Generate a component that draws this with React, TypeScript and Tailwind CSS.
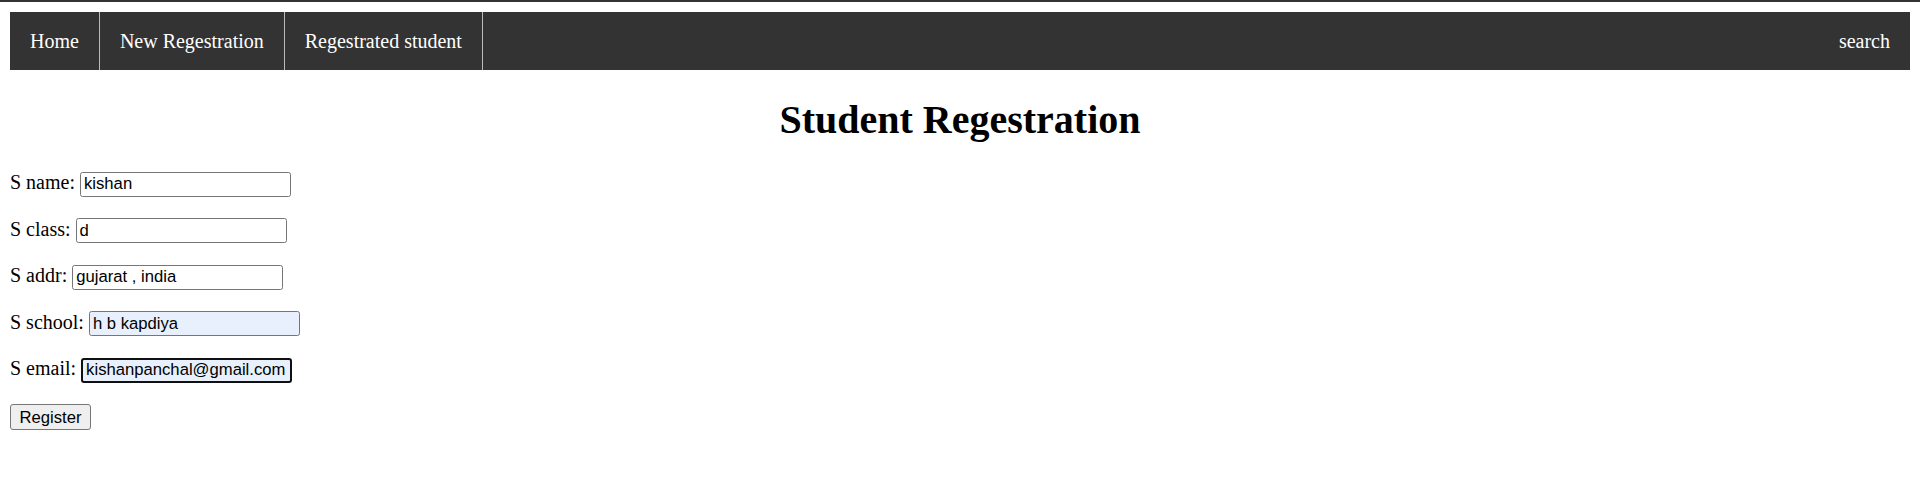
import React from "react";

const serif = { fontFamily: '"Liberation Serif", "Times New Roman", serif' };

function Row({ label, value, extra }: { label: string; value: string; extra?: string }) {
  return (
    <div className="flex items-baseline h-[25px]">
      <span className="text-[20px] leading-[23px] text-black whitespace-pre" style={serif}>
        {label + "\u00a0"}
      </span>
      <input
        readOnly
        value={value}
        className={
          "w-[211px] h-[25px] rounded-[2.5px] px-[3px] py-0 text-[16.67px] text-black outline-none font-['Liberation_Sans',Arial,sans-serif] " +
          (extra ?? "border border-[#767676] bg-white")
        }
      />
    </div>
  );
}

export default function App() {
  return (
    <div className="w-[1920px] h-[478px] bg-white overflow-hidden" style={serif}>
      <div className="h-[2px] bg-[#333]" />
      <div className="px-[10px] pt-[10px]">
        <nav className="flex h-[58px] bg-[#333] text-white text-[20px]">
          <a className="flex items-center px-[20px] border-r border-[#bbbbbb]">Home</a>
          <a className="flex items-center px-[20px] border-r border-[#bbbbbb]">New Regestration</a>
          <a className="flex items-center px-[20px] border-r border-[#bbbbbb]">Regestrated student</a>
          <a className="flex items-center px-[20px] ml-auto">search</a>
        </nav>
        <h1 className="text-center text-[40px] font-bold leading-[46px] mt-[27px] mb-[28px] text-black">
          Student Regestration
        </h1>
        <div className="flex flex-col gap-[21.5px]">
          <Row label="S name:" value="kishan" />
          <Row label="S class:" value="d" />
          <Row label="S addr:" value="gujarat , india" />
          <Row label="S school:" value="h b kapdiya" extra="border border-[#767676] bg-[#e8f0fe]" />
          <Row
            label="S email:"
            value="kishanpanchal@gmail.com"
            extra="border-2 border-[#101010] rounded-[3px] bg-[#e8f0fe] px-[2px]"
          />
          <div>
            <button className="w-[81px] h-[26px] bg-[#efefef] border border-[#767676] rounded-[3px] text-[16.67px] text-black font-['Liberation_Sans',Arial,sans-serif]">
              Register
            </button>
          </div>
        </div>
      </div>
    </div>
  );
}
